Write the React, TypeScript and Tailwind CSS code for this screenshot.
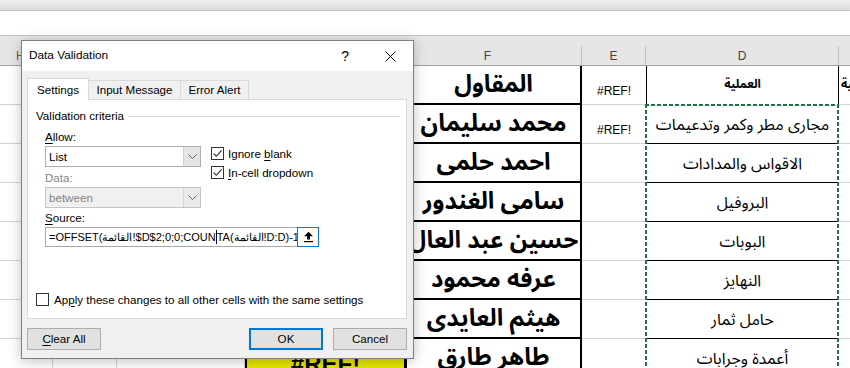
import React from "react";

const AR = "font-['Noto_Sans_Arabic','Noto_Naskh_Arabic','DejaVu_Sans',sans-serif]";

type Row = { f: string; e?: string; d: string; g?: string };

const ROWS: Row[] = [
  { f: "المقاول", e: "#REF!", d: "العملية" },
  { f: "محمد سليمان", e: "#REF!", d: "مجارى مطر وكمر وتدعيمات" },
  { f: "احمد حلمى", d: "الاقواس والمدادات" },
  { f: "سامى الغندور", d: "البروفيل" },
  { f: "حسين عبد العال", d: "البوبات" },
  { f: "عرفه محمود", d: "النهايز" },
  { f: "هيثم العايدى", d: "حامل ثمار" },
  { f: "طاهر طارق", d: "أعمدة وجرابات", g: "#REF!" },
];

function SheetRow({ r, i }: { r: Row; i: number }) {
  const first = i === 0;
  return (
    <div className="flex h-[39px] shrink-0">
      <div className="w-[53px] shrink-0 border-r border-b border-[#d4d4d4]" />
      <div className="w-[64px] shrink-0 border-r border-b border-[#d4d4d4]" />
      <div className="w-[128px] shrink-0 border-r border-b border-[#d4d4d4]" />
      {r.g ? (
        <div className="w-[160px] shrink-0 border-l-2 border-r border-black bg-[#e6e600] flex items-end justify-center overflow-hidden">
          <span className="text-[24px] font-bold leading-[28px] text-black">{r.g}</span>
        </div>
      ) : (
        <div className="w-[160px] shrink-0 border-r border-b border-[#d4d4d4]" />
      )}
      <div className="w-[177px] shrink-0 border-l-2 border-r-2 border-b-2 border-black flex items-center justify-center pt-[1px]">
        <span dir="rtl" className={`${AR} text-[24px] leading-[26px] font-bold whitespace-nowrap text-black`}>
          {r.f}
        </span>
      </div>
      <div className="w-[64px] shrink-0 border-b border-[#d4d4d4] flex items-end justify-center pb-[6px]">
        {r.e ? <span className="text-[12px] leading-[14px] text-black">{r.e}</span> : null}
      </div>
      <div
        className={
          first
            ? "w-[193px] shrink-0 border-l border-r border-b border-black flex items-center justify-center"
            : "w-[193px] shrink-0 border-l border-r border-b border-black flex items-center justify-center pt-[2px]"
        }
      >
        <span
          dir="rtl"
          className={
            first
              ? `${AR} text-[12px] leading-[20px] font-bold whitespace-nowrap text-black`
              : `${AR} text-[16px] leading-[24px] whitespace-nowrap text-black`
          }
        >
          {r.d}
        </span>
      </div>
      <div className="flex-1 border-b border-[#d4d4d4] overflow-hidden flex items-center pl-[2px]">
        {first ? (
          <span dir="rtl" className={`${AR} text-[12px] leading-[20px] font-bold whitespace-nowrap text-black`}>
            الكمية
          </span>
        ) : null}
      </div>
    </div>
  );
}

function HeaderRow() {
  return (
    <div className="h-[30px] shrink-0 bg-[#e6e6e6] border-b border-[#a0a0a0] flex pt-[10px] text-[12px] text-[#444444]">
      <div className="w-[53px] shrink-0 border-r border-[#bfbfbf] flex items-center pl-[16px] text-[#a0561a]">H</div>
      <div className="w-[64px] shrink-0 border-r border-[#bfbfbf]" />
      <div className="w-[128px] shrink-0 border-r border-[#bfbfbf]" />
      <div className="w-[160px] shrink-0 border-r border-[#bfbfbf]" />
      <div className="w-[177px] shrink-0 border-r border-[#bfbfbf] flex items-center justify-center pr-[11px]">F</div>
      <div className="w-[64px] shrink-0 border-r border-[#bfbfbf] flex items-center justify-center">E</div>
      <div className="w-[193px] shrink-0 border-r border-[#bfbfbf] flex items-center justify-center">D</div>
      <div className="flex-1" />
    </div>
  );
}

function Marquee() {
  return (
    <div className="absolute left-[645px] top-[104px] w-[194px] h-[300px] pointer-events-none">
      <div className="absolute left-0 top-0 bottom-0 w-[2px] bg-[repeating-linear-gradient(to_bottom,#217346_0px,#217346_4px,#ffffff_4px,#ffffff_6px)]" />
      <div className="absolute right-0 top-0 bottom-0 w-[2px] bg-[repeating-linear-gradient(to_bottom,#217346_0px,#217346_4px,#ffffff_4px,#ffffff_6px)]" />
      <div className="absolute left-0 right-0 top-0 h-[2px] bg-[repeating-linear-gradient(to_right,#217346_0px,#217346_4px,#ffffff_4px,#ffffff_6px)]" />
    </div>
  );
}

function Check({ checked }: { checked?: boolean }) {
  return (
    <span className="w-[13px] h-[13px] shrink-0 border border-[#333333] bg-white flex items-center justify-center">
      {checked ? (
        <svg width="11" height="11" viewBox="0 0 11 11">
          <path d="M1.6 5.6 L4.3 8.3 L9.6 2.4" fill="none" stroke="#222222" strokeWidth="1.1" />
        </svg>
      ) : null}
    </span>
  );
}

function Chevron() {
  return (
    <svg width="9" height="5" viewBox="0 0 9 5">
      <path d="M0.5 0.5 L4.5 4.5 L8.5 0.5" fill="none" stroke="#606060" strokeWidth="1" />
    </svg>
  );
}

function Dialog() {
  return (
    <div className="absolute left-[21px] top-[40px] w-[393px] h-[319px] flex flex-col border border-[#7f7f7f] bg-[#f0f0f0] shadow-[0_2px_12px_rgba(0,0,0,0.25)] text-[11.6px] text-black">
      <div className="h-[30px] shrink-0 bg-white flex items-center">
        <span className="ml-[7px] text-[11.8px]">Data Validation</span>
        <span className="ml-auto mr-[36px] text-[14px] leading-none">?</span>
        <svg className="mr-[17px]" width="11" height="11" viewBox="0 0 11 11">
          <path d="M0.5 0.5 L10.5 10.5 M10.5 0.5 L0.5 10.5" stroke="#000000" strokeWidth="1" />
        </svg>
      </div>
      <div className="flex-1 flex flex-col pt-[7px] pl-[5px] pr-[6px]">
        <div className="flex items-end h-[22px] relative z-10">
          <div className="w-[62px] h-[22px] bg-white border border-b-0 border-[#d9d9d9] flex items-center justify-center">
            Settings
          </div>
          <div className="w-[93px] h-[19px] -ml-px mb-px bg-[#f0f0f0] border border-b-0 border-[#d9d9d9] flex items-center justify-center">
            Input Message
          </div>
          <div className="w-[69px] h-[19px] -ml-px mb-px bg-[#f0f0f0] border border-b-0 border-[#d9d9d9] flex items-center justify-center">
            Error Alert
          </div>
        </div>
        <div className="-mt-px h-[220px] shrink-0 bg-white border border-[#d9d9d9] flex flex-col">
          <div className="mt-[9px] h-[14px] flex items-center pl-[8px] pr-[6px]">
            <span>Validation criteria</span>
            <span className="flex-1 ml-[4px] h-px bg-[#dcdcdc]" />
          </div>
          <div className="mt-[7px] h-[14px] flex items-center pl-[17px]">
            <span>
              <span className="underline underline-offset-2">A</span>llow:
            </span>
          </div>
          <div className="flex pl-[17px]">
            <div className="w-[156px] flex flex-col">
              <div className="mt-[2px] h-[21px] flex border border-[#adadad] bg-white">
                <span className="flex-1 pl-[3px] flex items-center">List</span>
                <span className="w-[17px] flex items-center justify-center border-l border-[#d0d0d0] bg-[#e5e5e5]">
                  <Chevron />
                </span>
              </div>
              <div className="mt-[4px] h-[14px] flex items-center text-[#838383]">Data:</div>
              <div className="mt-[2px] h-[21px] flex border border-[#c4c4c4] bg-[#f0f0f0] text-[#838383]">
                <span className="flex-1 pl-[3px] flex items-center">between</span>
                <span className="w-[17px] flex items-center justify-center border-l border-[#d6d6d6] bg-[#eaeaea]">
                  <Chevron />
                </span>
              </div>
            </div>
            <div className="ml-[10px] pt-[3px] flex flex-col gap-[6px]">
              <div className="h-[13px] flex items-center gap-[4px]">
                <Check checked />
                <span>
                  Ignore <span className="underline underline-offset-2">b</span>lank
                </span>
              </div>
              <div className="h-[13px] flex items-center gap-[4px]">
                <Check checked />
                <span>
                  <span className="underline underline-offset-2">I</span>n-cell dropdown
                </span>
              </div>
            </div>
          </div>
          <div className="mt-[3px] h-[14px] flex items-center pl-[17px]">
            <span>
              <span className="underline underline-offset-2">S</span>ource:
            </span>
          </div>
          <div className="mt-[2px] pl-[17px] flex">
            <div className="w-[274px] h-[20px] flex border border-[#a8a8a8] bg-white">
              <span className="flex-1 overflow-hidden whitespace-nowrap flex items-center pl-[3px] text-[11px]" dir="ltr">
                <span>=OFFSET(القائمة!$D$2;0;0;COUN</span>
                <span className="inline-block w-px h-[14px] bg-black shrink-0" />
                <span>TA(القائمة!D:D)-1)</span>
              </span>
              <span className="w-[22px] h-[20px] -my-px -mr-px shrink-0 border border-[#0078d7] bg-white flex items-center justify-center">
                <svg width="11" height="12" viewBox="0 0 11 12">
                  <path d="M5.5 0.8 L10 5.3 L7 5.3 L7 8.5 L4 8.5 L4 5.3 L1 5.3 Z" fill="#000000" />
                  <rect x="1" y="10" width="9" height="1.2" fill="#000000" />
                </svg>
              </span>
            </div>
          </div>
          <div className="mt-auto mb-[10px] pl-[8px] flex items-center gap-[5px]">
            <Check />
            <span>
              Ap<span className="underline underline-offset-2">p</span>ly these changes to all other cells with the same settings
            </span>
          </div>
        </div>
        <div className="mt-[9px] flex h-[22px]">
          <div className="w-[74px] h-[22px] border border-[#adadad] bg-[#e1e1e1] flex items-center justify-center">
            <span>
              <span className="underline underline-offset-2">C</span>lear All
            </span>
          </div>
          <div className="ml-auto w-[74px] h-[22px] border-2 border-[#0078d7] bg-[#e1e1e1] flex items-center justify-center">
            OK
          </div>
          <div className="ml-[10px] w-[74px] h-[22px] border border-[#adadad] bg-[#e1e1e1] flex items-center justify-center">
            Cancel
          </div>
        </div>
      </div>
    </div>
  );
}

export default function App() {
  return (
    <div className="relative w-[850px] h-[368px] overflow-hidden bg-white font-['Liberation_Sans',sans-serif] flex flex-col">
      <div className="h-[10px] shrink-0 bg-linear-to-b from-[#efefef] to-[#dadada]" />
      <div className="h-px shrink-0 bg-[#c6c6c6]" />
      <div className="h-[24px] shrink-0 bg-white" />
      <div className="h-px shrink-0 bg-[#c6c6c6]" />
      <HeaderRow />
      {ROWS.map((r, i) => (
        <SheetRow key={i} r={r} i={i} />
      ))}
      <Marquee />
      <Dialog />
    </div>
  );
}
